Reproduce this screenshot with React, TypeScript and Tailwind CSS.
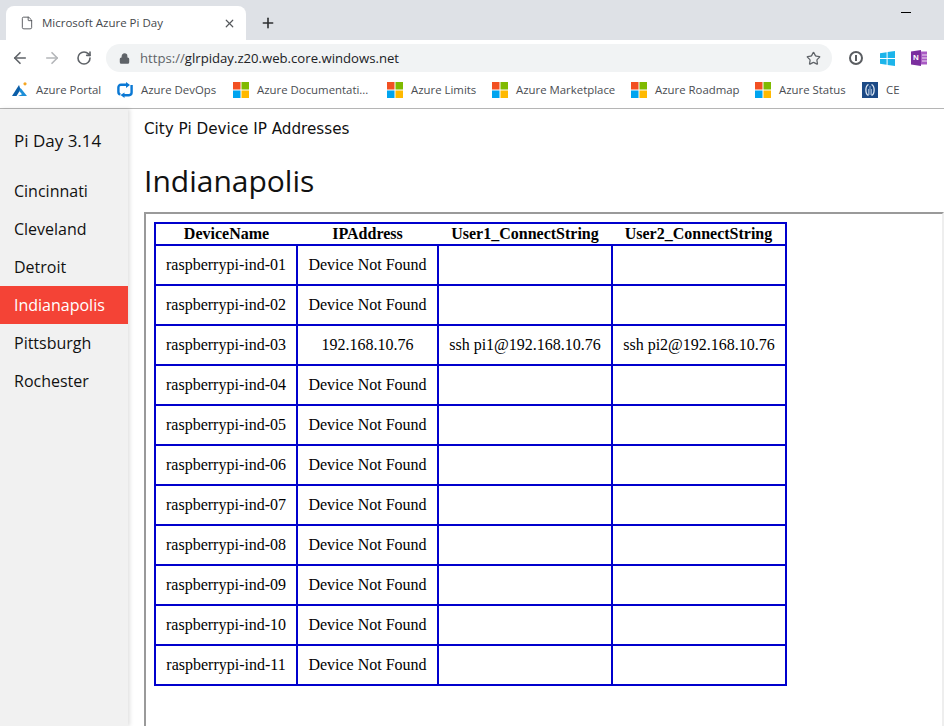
import { ArrowLeft, ArrowRight, File, Lock, Plus, RotateCw, Star, X } from "lucide-react";

const CITIES = ["Cincinnati", "Cleveland", "Detroit", "Indianapolis", "Pittsburgh", "Rochester"];

const DEVICES = Array.from({ length: 11 }, (_, i) => {
  const num = String(i + 1).padStart(2, "0");
  const found = num === "03";
  return {
    name: `raspberrypi-ind-${num}`,
    ip: found ? "192.168.10.76" : "Device Not Found",
    user1: found ? "ssh pi1@192.168.10.76" : "",
    user2: found ? "ssh pi2@192.168.10.76" : "",
  };
});

function MsLogo() {
  return (
    <svg width="16" height="16" viewBox="0 0 16 16" className="shrink-0">
      <rect x="0" y="0" width="7.5" height="7.5" fill="#f25022" />
      <rect x="8.5" y="0" width="7.5" height="7.5" fill="#7fba00" />
      <rect x="0" y="8.5" width="7.5" height="7.5" fill="#00a4ef" />
      <rect x="8.5" y="8.5" width="7.5" height="7.5" fill="#ffb900" />
    </svg>
  );
}

function AzureLogo() {
  return (
    <svg width="16" height="16" viewBox="0 0 16 16" className="shrink-0">
      <path d="M7 3 L0 14 H4.5 L8.6 7.5 Z" fill="#0a5ea8" />
      <path d="M8.6 6 L15 14 H6 L10 12.2 L7.2 9 Z" fill="#1e8fd8" />
      <circle cx="13" cy="1.8" r="1.6" fill="#f5a623" />
    </svg>
  );
}

function DevOpsLogo() {
  return (
    <svg width="16" height="16" viewBox="0 0 16 16" className="shrink-0">
      <path
        d="M9.5 2.8 H4 C2.4 2.8 1.4 3.8 1.4 5.4 V10 C1.4 11.4 2.2 12.2 3.4 12.4 M7 13.2 H12 C13.6 13.2 14.6 12.2 14.6 10.6 V3"
        fill="none"
        stroke="#0a78d4"
        strokeWidth="2.4"
      />
      <path d="M9 0 L13 3 L9 6 Z M7.5 10.5 L3.5 13 L7.5 16 Z" fill="#0a78d4" />
    </svg>
  );
}

function CeLogo() {
  return (
    <svg width="16" height="16" viewBox="0 0 16 16" className="shrink-0">
      <rect width="16" height="16" fill="#1c4a86" />
      <path d="M6.5 2.5 C3 4 3 12 6.5 13.5 M9.5 2.5 C13 4 13 12 9.5 13.5" fill="none" stroke="#dfe8f2" strokeWidth="1.3" />
      <path d="M8 4 V13 M6.6 7 V13 M9.4 7 V13" stroke="#b9cde3" strokeWidth="0.8" />
    </svg>
  );
}

function WindowsLogo() {
  return (
    <svg width="15" height="15" viewBox="0 0 15 15">
      <path d="M0 2.2 L6.6 1.2 V7 H0 Z M7.6 1 L15 0 V7 H7.6 Z M0 8 H6.6 V13.8 L0 12.8 Z M7.6 8 H15 V15 L7.6 14 Z" fill="#1cb4ea" />
    </svg>
  );
}

function OneNoteLogo() {
  return (
    <div className="relative h-[16px] w-[16px]">
      <svg width="16" height="16" viewBox="0 0 16 16" className="absolute left-0 top-0">
        <path d="M0 1.5 L10 0 V16 L0 14.5 Z" fill="#7b2f9e" />
        <path d="M10 1.5 H16 V14.5 H10 Z" fill="#a95ac4" />
        <path d="M11 5 H16 M11 8 H16 M11 11 H16" stroke="#fff" strokeWidth="0.8" />
      </svg>
      <span className="absolute left-[2px] top-[3px] font-['Liberation_Sans',sans-serif] text-[8px] leading-[10px] font-bold text-white">
        N
      </span>
    </div>
  );
}

function Bookmark({ icon, label, width }: { icon: React.ReactNode; label: string; width: string }) {
  return (
    <div className={`flex items-center gap-[8px] ${width}`}>
      {icon}
      <span className="whitespace-nowrap pb-[2px] text-[11.4px] text-[#4a4d52]">{label}</span>
    </div>
  );
}

export default function App() {
  return (
    <div className="flex h-[726px] w-[944px] flex-col overflow-hidden bg-white font-['Open_Sans',sans-serif]">
      {/* browser chrome */}
      <div className="flex h-[40px] shrink-0 bg-[#dee1e6] pl-[6px] pt-[6px]">
        <div className="flex h-[34px] w-[240px] items-center rounded-t-[8px] bg-white pl-[14px] pr-[10px]">
          <File size={14} strokeWidth={1.5} className="text-[#4a4d52]" />
          <span className="ml-[8px] flex-1 text-[11.5px] text-[#45484c]">Microsoft Azure Pi Day</span>
          <X size={13} strokeWidth={2.2} className="text-[#55585c]" />
        </div>
        <div className="ml-[14px] flex h-[34px] items-center">
          <Plus size={16} strokeWidth={2.4} className="text-[#2c2e30]" />
        </div>
        <div className="ml-auto mr-[33px] mt-[6px] h-[1px] w-[10px] bg-black" />
      </div>

      <div className="flex h-[40px] shrink-0 items-center pb-[4px] pl-[11px]">
        <ArrowLeft size={18} strokeWidth={2.2} className="text-[#5f6368]" />
        <ArrowRight size={18} strokeWidth={2.2} className="ml-[14px] text-[#b4b6b9]" />
        <RotateCw size={16} strokeWidth={2.4} className="ml-[15px] text-[#5f6368]" />
        <div className="ml-[14px] flex h-[28px] w-[726px] items-center rounded-full bg-[#f1f3f4] pl-[13px] pr-[11px]">
          <Lock size={11} strokeWidth={2.6} className="text-[#5f6368]" fill="#5f6368" />
          <span className="ml-[10px] flex-1 pt-[2px] text-[13.15px] text-[#202124]">
            <span className="text-[#5f6368]">https://</span>glrpiday.z20.web.core.windows.net
          </span>
          <Star size={15} strokeWidth={2} className="text-[#5f6368]" />
        </div>
        <div className="ml-[17px] flex h-[14px] w-[14px] items-center justify-center rounded-full border-2 border-[#5a5d61]">
          <div className="h-[6px] w-[2px] bg-[#5a5d61]" />
        </div>
        <div className="ml-[17px]">
          <WindowsLogo />
        </div>
        <div className="ml-[16px]">
          <OneNoteLogo />
        </div>
      </div>

      <div className="flex h-[29px] shrink-0 items-center border-b border-[#b5b5b5] pb-[7px] pl-[12px]">
        <Bookmark icon={<AzureLogo />} label="Azure Portal" width="w-[105px]" />
        <Bookmark icon={<DevOpsLogo />} label="Azure DevOps" width="w-[116px]" />
        <Bookmark icon={<MsLogo />} label="Azure Documentati..." width="w-[154px]" />
        <Bookmark icon={<MsLogo />} label="Azure Limits" width="w-[105px]" />
        <Bookmark icon={<MsLogo />} label="Azure Marketplace" width="w-[139px]" />
        <Bookmark icon={<MsLogo />} label="Azure Roadmap" width="w-[124px]" />
        <Bookmark icon={<MsLogo />} label="Azure Status" width="w-[107px]" />
        <Bookmark icon={<CeLogo />} label="CE" width="w-[40px]" />
      </div>

      {/* page */}
      <div className="flex min-h-0 flex-1">
        <div className="w-[128px] shrink-0 bg-[#f1f1f1] shadow-[2px_0_4px_rgba(0,0,0,0.12)]">
          <div className="pl-[14px] pt-[20px] text-[17px] leading-[24px] text-[#111]">Pi Day 3.14</div>
          <nav className="mt-[19px]">
            {CITIES.map((city) => (
              <div
                key={city}
                className={
                  city === "Indianapolis"
                    ? "h-[38px] bg-[#f44336] pl-[14px] text-[16px] leading-[38px] text-white"
                    : "h-[38px] pl-[14px] text-[16px] leading-[38px] text-[#111]"
                }
              >
                {city}
              </div>
            ))}
          </nav>
        </div>

        <div className="min-w-0 flex-1 pl-[16px]">
          <div className="pt-[10px] font-['DejaVu_Sans',sans-serif] text-[15.2px] leading-[20px] text-[#111]">
            City Pi Device IP Addresses
          </div>
          <h1 className="mt-[20px] text-[30px] leading-[44px] text-[#111]">Indianapolis</h1>
          <div className="mt-[9px] h-[600px] border-2 border-b-0 border-t-[#9a9a9a] border-l-[#9a9a9a] border-r-[#eeeeee] pl-[8px] pt-[8px]">
            <table className="w-[633px] table-fixed border-collapse border-2 border-[#0000cd] font-['Liberation_Serif',serif] text-[16px] text-black">
              <colgroup>
                <col className="w-[142px]" />
                <col className="w-[141px]" />
                <col className="w-[174px]" />
                <col className="w-[174px]" />
              </colgroup>
              <thead>
                <tr className="h-[22px] border-b-2 border-[#0000cd]">
                  <th className="p-0 font-bold leading-[20px]">DeviceName</th>
                  <th className="p-0 font-bold leading-[20px]">IPAddress</th>
                  <th className="p-0 font-bold leading-[20px]">User1_ConnectString</th>
                  <th className="p-0 font-bold leading-[20px]">User2_ConnectString</th>
                </tr>
              </thead>
              <tbody>
                {DEVICES.map((d) => (
                  <tr key={d.name} className="h-[40px]">
                    <td className="border-2 border-[#0000cd] p-0 text-center">{d.name}</td>
                    <td className="border-2 border-[#0000cd] p-0 text-center">{d.ip}</td>
                    <td className="border-2 border-[#0000cd] p-0 text-center">{d.user1}</td>
                    <td className="border-2 border-[#0000cd] p-0 text-center">{d.user2}</td>
                  </tr>
                ))}
              </tbody>
            </table>
          </div>
        </div>
      </div>
    </div>
  );
}
